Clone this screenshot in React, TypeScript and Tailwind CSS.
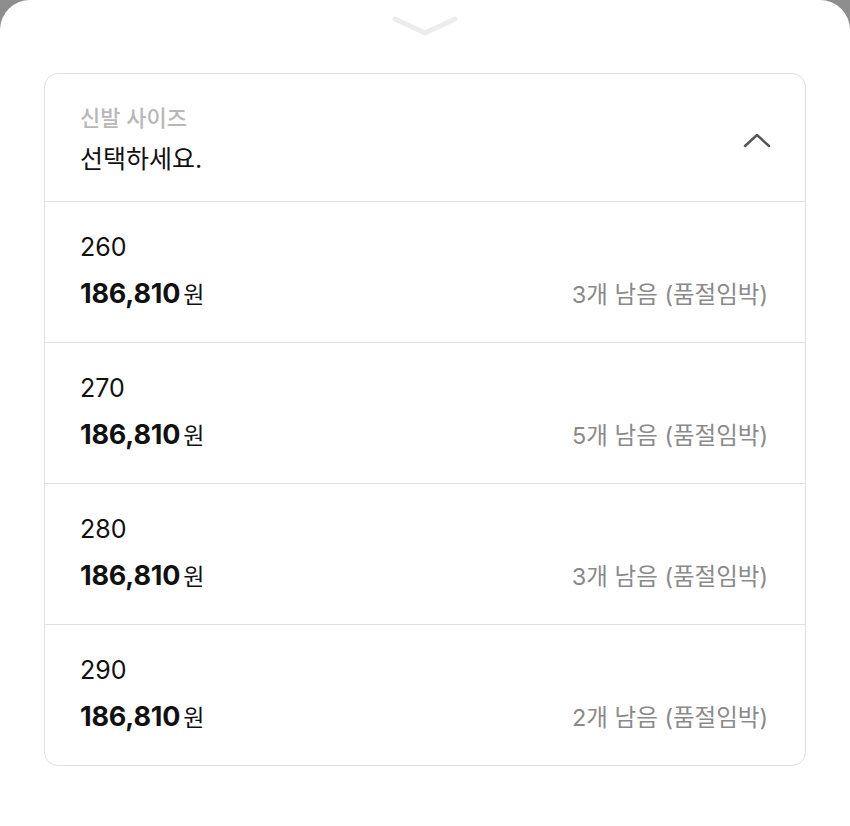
const sizes = [
  { size: '260', stock: 3 },
  { size: '270', stock: 5 },
  { size: '280', stock: 3 },
  { size: '290', stock: 2 },
];

const font = { fontFamily: 'Inter, "Noto Sans CJK KR", sans-serif' };

export default function App() {
  return (
    <div className="h-[826px] w-[850px] bg-[#8d8d8d] overflow-hidden" style={font}>
      <div className="h-full bg-white rounded-t-[30px] flex flex-col items-center">
        {/* drag handle */}
        <svg width="68" height="24" viewBox="0 0 68 24" className="mt-[13px]">
          <path d="M4 6 L34 20 L64 6" fill="none" stroke="#ececec" strokeWidth="5" strokeLinecap="round" strokeLinejoin="round" />
        </svg>

        <div className="mt-[36px] w-[762px] border border-[#e0e0e0] rounded-[14px] overflow-hidden">
          {/* header */}
          <div className="flex items-center justify-between pl-[35px] pr-[34px] pt-[31px] pb-[26px] border-b border-[#e2e2e2]">
            <div className="flex flex-col">
              <span className="text-[22px] leading-[26px] font-medium text-[#b8b8b8]">신발 사이즈</span>
              <span className="mt-[12px] text-[25px] leading-[32px] text-[#111]">선택하세요.</span>
            </div>
            <svg width="28" height="16" viewBox="0 0 28 16">
              <path d="M2 14 L14 3 L26 14" fill="none" stroke="#555" strokeWidth="2.4" strokeLinecap="round" strokeLinejoin="round" />
            </svg>
          </div>

          {sizes.map((s, i) => (
            <div
              key={s.size}
              className={`pl-[35px] pr-[37px] pt-[30px] pb-[32px] ${i < sizes.length - 1 ? 'border-b border-[#e2e2e2]' : ''}`}
            >
              <div className="text-[25px] leading-[30px] text-[#111]">{s.size}</div>
              <div className="mt-[16px] h-[32px] leading-[32px] flex items-baseline justify-between text-[#111]">
                <div className="leading-[32px]">
                  <span className="text-[27px] font-bold tracking-[-0.2px]">186,810</span>
                  <span className="text-[23px] ml-[3px]">원</span>
                </div>
                <span className="text-[23.5px] leading-[32px] text-[#8a8a8a]">{s.stock}개 남음 (품절임박)</span>
              </div>
            </div>
          ))}
        </div>
      </div>
    </div>
  );
}
